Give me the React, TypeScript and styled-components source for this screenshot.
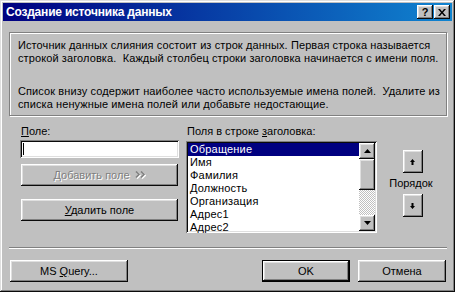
import React from "react";
import styled, { createGlobalStyle, css } from "styled-components";

const GlobalStyle = createGlobalStyle`
  html, body {
    margin: 0;
    padding: 0;
    background: #c0c0c0;
  }
  * {
    box-sizing: border-box;
  }
`;

const raised = css`
  box-shadow: inset -1px -1px #0a0a0a, inset 1px 1px #ffffff,
    inset -2px -2px #808080, inset 2px 2px #dfdfdf;
`;

const sunken = css`
  box-shadow: inset 1px 1px #808080, inset -1px -1px #ffffff,
    inset 2px 2px #0a0a0a, inset -2px -2px #dfdfdf;
`;

const WindowUI = styled.div`
  width: 455px;
  height: 292px;
  padding: 3px;
  display: flex;
  flex-direction: column;
  background: #c0c0c0;
  font-family: "Liberation Sans", Arial, sans-serif;
  font-size: 11px;
  color: #000;
  box-shadow: inset -1px -1px #0a0a0a, inset 1px 1px #dfdfdf,
    inset -2px -2px #808080, inset 2px 2px #ffffff;
`;

const TitleBarUI = styled.div`
  height: 18px;
  display: flex;
  align-items: center;
  justify-content: space-between;
  padding: 0 2px 0 3px;
  background: linear-gradient(to right, #000080, #1084d0);
`;

const TitleTextUI = styled.span`
  color: #fff;
  font-weight: bold;
  font-size: 12px;
  letter-spacing: -0.2px;
`;

const TitleButtonsUI = styled.div`
  display: flex;
  gap: 1px;
`;

const TitleButtonUI = styled.div`
  width: 16px;
  height: 14px;
  background: #c0c0c0;
  ${raised};
  display: flex;
  align-items: center;
  justify-content: center;
  font-weight: bold;
  font-size: 11px;
  line-height: 1;
`;

const ContentUI = styled.div`
  flex: 1;
  display: flex;
  flex-direction: column;
  padding: 0 5px 0 6px;
`;

const InfoBoxUI = styled.div`
  margin-top: 11px;
  height: 84px;
  border: 1px solid #808080;
  box-shadow: 1px 1px 0 #ffffff, inset 1px 1px 0 #ffffff;
  padding: 6px 8px 0 8px;
  line-height: 13px;
  letter-spacing: 0.1px;
`;

const ParagraphUI = styled.p<{ $gap?: number }>`
  margin: 0;
  margin-top: ${({ $gap }) => $gap ?? 0}px;
  white-space: pre;
`;

const MainUI = styled.div`
  margin-top: 9px;
  display: flex;
  height: 108px;
`;

const LeftColUI = styled.div`
  margin-left: 11px;
  width: 159px;
  display: flex;
  flex-direction: column;
`;

const LabelUI = styled.div`
  height: 15px;
  line-height: 13px;
  padding-left: 1px;
`;

const InputUI = styled.div`
  height: 18px;
  background: #fff;
  ${sunken};
  padding: 3px 3px;
  display: flex;
  align-items: center;
`;

const CaretUI = styled.span`
  width: 1px;
  height: 12px;
  background: #000;
`;

const ButtonUI = styled.div<{ $disabled?: boolean; $default?: boolean; $width?: number }>`
  height: 22px;
  width: ${({ $width }) => ($width ? `${$width}px` : "auto")};
  background: #c0c0c0;
  display: flex;
  align-items: center;
  justify-content: center;
  gap: 5px;
  ${raised};
  ${({ $disabled }) =>
    $disabled &&
    css`
      color: #808080;
      text-shadow: 1px 1px 0 #ffffff;
    `}
  ${({ $default }) =>
    $default &&
    css`
      border: 1px solid #000;
    `}
`;

const WideButtonUI = styled(ButtonUI)<{ $top: number }>`
  margin: ${({ $top }) => $top}px 1px 0;
`;

const U = styled.span`
  text-decoration: underline;
  text-underline-offset: 1px;
`;

const ListColUI = styled.div`
  margin-left: 7px;
  width: 191px;
  display: flex;
  flex-direction: column;
`;

const ListLabelUI = styled(LabelUI)`
  height: 16px;
`;

const ListBoxUI = styled.div`
  height: 92px;
  background: #fff;
  ${sunken};
  padding: 2px;
  display: flex;
  overflow: hidden;
`;

const ListItemsUI = styled.div`
  flex: 1;
  display: flex;
  flex-direction: column;
`;

const ListItemUI = styled.div<{ $selected?: boolean }>`
  height: 13px;
  line-height: 13px;
  padding-left: 2px;
  flex-shrink: 0;
  letter-spacing: 0.2px;
  background: ${({ $selected }) => ($selected ? "#000080" : "transparent")};
  color: ${({ $selected }) => ($selected ? "#fff" : "#000")};
`;

const ScrollBarUI = styled.div`
  width: 16px;
  display: flex;
  flex-direction: column;
`;

const ScrollArrowUI = styled.div`
  width: 16px;
  height: 16px;
  flex-shrink: 0;
  background: #c0c0c0;
  ${raised};
  display: flex;
  align-items: center;
  justify-content: center;
`;

const ThumbUI = styled.div`
  height: 31px;
  flex-shrink: 0;
  background: #c0c0c0;
  ${raised};
`;

const TrackUI = styled.div`
  flex: 1;
  background-image: conic-gradient(
    #c0c0c0 90deg,
    #ffffff 90deg 180deg,
    #c0c0c0 180deg 270deg,
    #ffffff 270deg
  );
  background-size: 2px 2px;
`;

const OrderColUI = styled.div`
  margin-left: 11px;
  width: 46px;
  display: flex;
  flex-direction: column;
  align-items: center;
  padding-top: 25px;
`;

const OrderButtonUI = styled.div`
  width: 20px;
  height: 23px;
  margin-left: 3px;
  background: #c0c0c0;
  ${raised};
  display: flex;
  align-items: center;
  justify-content: center;
`;

const OrderLabelUI = styled.div`
  height: 21px;
  line-height: 21px;
`;

const SeparatorUI = styled.div`
  margin-top: 14px;
  height: 2px;
  border-top: 1px solid #808080;
  border-bottom: 1px solid #ffffff;
`;

const FooterUI = styled.div`
  margin-top: 11px;
  display: flex;
  align-items: center;
  padding: 0 1px;
  gap: 8px;
`;

const SpacerUI = styled.div`
  flex: 1;
`;

function Arrow({ dir }: { dir: "up" | "down" }) {
  const d = dir === "up" ? "M3.5 0 L7 4 L0 4 Z" : "M0 0 L7 0 L3.5 4 Z";
  return (
    <svg width="7" height="4" viewBox="0 0 7 4">
      <path d={d} fill="#000" />
    </svg>
  );
}

function OrderArrow({ dir }: { dir: "up" | "down" }) {
  const d =
    dir === "up"
      ? "M2.5 0 L5 3 L3.5 3 L3.5 6 L1.5 6 L1.5 3 L0 3 Z"
      : "M2.5 6 L5 3 L3.5 3 L3.5 0 L1.5 0 L1.5 3 L0 3 Z";
  return (
    <svg width="5" height="6" viewBox="0 0 5 6">
      <path d={d} fill="#000" />
    </svg>
  );
}

function Chevrons() {
  return (
    <svg width="11" height="8" viewBox="0 0 11 8">
      <g fill="none" stroke="#fff" strokeWidth="1.6">
        <path d="M2 1.5 L5 4.5 L2 7.5" />
        <path d="M7 1.5 L10 4.5 L7 7.5" />
      </g>
      <g fill="none" stroke="#808080" strokeWidth="1.6">
        <path d="M1 0.5 L4 3.5 L1 6.5" />
        <path d="M6 0.5 L9 3.5 L6 6.5" />
      </g>
    </svg>
  );
}

function CloseGlyph() {
  return (
    <svg width="8" height="7" viewBox="0 0 8 7">
      <path d="M0 0 L2 0 L4 2.5 L6 0 L8 0 L5 3.5 L8 7 L6 7 L4 4.5 L2 7 L0 7 L3 3.5 Z" fill="#000" />
    </svg>
  );
}

const fields = ["Обращение", "Имя", "Фамилия", "Должность", "Организация", "Адрес1", "Адрес2"];

export default function App(): JSX.Element {
  return (
    <>
      <GlobalStyle />
      <WindowUI>
        <TitleBarUI>
          <TitleTextUI>Создание источника данных</TitleTextUI>
          <TitleButtonsUI>
            <TitleButtonUI>?</TitleButtonUI>
            <TitleButtonUI>
              <CloseGlyph />
            </TitleButtonUI>
          </TitleButtonsUI>
        </TitleBarUI>
        <ContentUI>
          <InfoBoxUI>
            <ParagraphUI>
              {"Источник данных слияния состоит из строк данных. Первая строка называется\nстрокой заголовка.  Каждый столбец строки заголовка начинается с имени поля."}
            </ParagraphUI>
            <ParagraphUI $gap={20}>
              {"Список внизу содержит наиболее часто используемые имена полей.  Удалите из\nсписка ненужные имена полей или добавьте недостающие."}
            </ParagraphUI>
          </InfoBoxUI>
          <MainUI>
            <LeftColUI>
              <LabelUI>
                <U>П</U>оле:
              </LabelUI>
              <InputUI>
                <CaretUI />
              </InputUI>
              <WideButtonUI $disabled $top={6}>
                Добавить поле <Chevrons />
              </WideButtonUI>
              <WideButtonUI $top={13}>
                <span>
                  <U>У</U>далить поле
                </span>
              </WideButtonUI>
            </LeftColUI>
            <ListColUI>
              <ListLabelUI>
                Поля в строке <U>з</U>аголовка:
              </ListLabelUI>
              <ListBoxUI>
                <ListItemsUI>
                  {fields.map((f, i) => (
                    <ListItemUI key={f} $selected={i === 0}>
                      {f}
                    </ListItemUI>
                  ))}
                </ListItemsUI>
                <ScrollBarUI>
                  <ScrollArrowUI>
                    <Arrow dir="up" />
                  </ScrollArrowUI>
                  <ThumbUI />
                  <TrackUI />
                  <ScrollArrowUI>
                    <Arrow dir="down" />
                  </ScrollArrowUI>
                </ScrollBarUI>
              </ListBoxUI>
            </ListColUI>
            <OrderColUI>
              <OrderButtonUI>
                <OrderArrow dir="up" />
              </OrderButtonUI>
              <OrderLabelUI>Порядок</OrderLabelUI>
              <OrderButtonUI>
                <OrderArrow dir="down" />
              </OrderButtonUI>
            </OrderColUI>
          </MainUI>
          <SeparatorUI />
          <FooterUI>
            <ButtonUI $width={118}>
              <span>
                MS <U>Q</U>uery...
              </span>
            </ButtonUI>
            <SpacerUI />
            <ButtonUI $width={88} $default>
              OK
            </ButtonUI>
            <ButtonUI $width={88}>Отмена</ButtonUI>
          </FooterUI>
        </ContentUI>
      </WindowUI>
    </>
  );
}
